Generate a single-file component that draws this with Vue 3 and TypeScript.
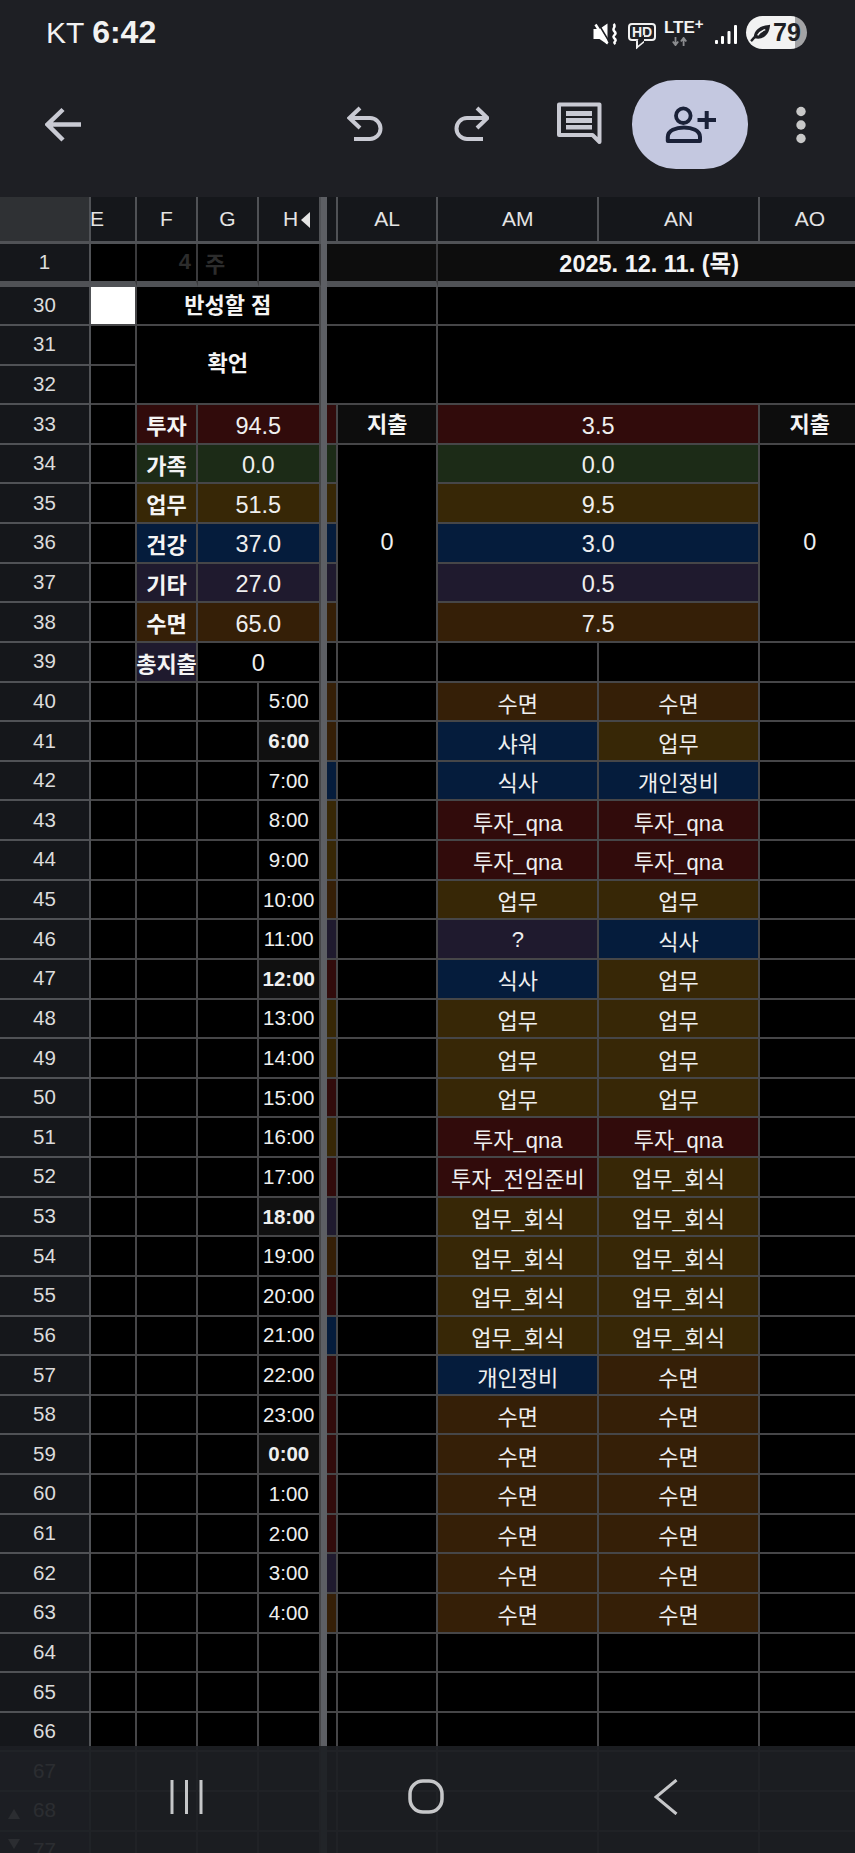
<script setup lang="ts">
type Tone = 'invest' | 'family' | 'work' | 'health' | 'other' | 'sleep' | 'none'

interface Cell {
  col: number
  span?: number
  row: number
  rowSpan?: number
  text?: string
  tone?: Tone
  kind?: string
}

// grid columns: 1 row header, 2 E, 3 F, 4 G, 5 H, 6 freeze bar, 7 AK, 8 AL, 9 AM, 10 AN, 11 AO
const headers = [
  { col: 2, text: 'E', kind: 'clip' },
  { col: 3, text: 'F', kind: '' },
  { col: 4, text: 'G', kind: '' },
  { col: 5, text: 'H', kind: 'collapse' },
  { col: 7, text: '', kind: '' },
  { col: 8, text: 'AL', kind: '' },
  { col: 9, text: 'AM', kind: '' },
  { col: 10, text: 'AN', kind: '' },
  { col: 11, text: 'AO', kind: '' },
]

const rowNumbers = [1]
for (let n = 30; n <= 68; n++) rowNumbers.push(n)
rowNumbers.push(77)

const gridRow = (n: number) => rowNumbers.indexOf(n) + 2

const summary: { row: number; label: string; left: string; right: string; tone: Tone }[] = [
  { row: 33, label: '투자', left: '94.5', right: '3.5', tone: 'invest' },
  { row: 34, label: '가족', left: '0.0', right: '0.0', tone: 'family' },
  { row: 35, label: '업무', left: '51.5', right: '9.5', tone: 'work' },
  { row: 36, label: '건강', left: '37.0', right: '3.0', tone: 'health' },
  { row: 37, label: '기타', left: '27.0', right: '0.5', tone: 'other' },
  { row: 38, label: '수면', left: '65.0', right: '7.5', tone: 'sleep' },
]

const S = '수면'
const W = '업무'
const Q = '투자_qna'
const D = '업무_회식'
const GR = '개인정비'

const toneOf = (text: string): Tone => {
  if (text === S) return 'sleep'
  if (text.startsWith('투자')) return 'invest'
  if (text.startsWith('업무')) return 'work'
  if (text === '?') return 'other'
  return 'health'
}

const schedule: [string, string, string, Tone][] = [
  ['5:00', S, S, 'sleep'],
  ['6:00', '샤워', W, 'sleep'],
  ['7:00', '식사', GR, 'health'],
  ['8:00', Q, Q, 'work'],
  ['9:00', Q, Q, 'work'],
  ['10:00', W, W, 'sleep'],
  ['11:00', '?', '식사', 'other'],
  ['12:00', '식사', W, 'invest'],
  ['13:00', W, W, 'work'],
  ['14:00', W, W, 'work'],
  ['15:00', W, W, 'invest'],
  ['16:00', Q, Q, 'work'],
  ['17:00', '투자_전임준비', D, 'invest'],
  ['18:00', D, D, 'other'],
  ['19:00', D, D, 'sleep'],
  ['20:00', D, D, 'invest'],
  ['21:00', D, D, 'health'],
  ['22:00', GR, S, 'invest'],
  ['23:00', S, S, 'invest'],
  ['0:00', S, S, 'invest'],
  ['1:00', S, S, 'invest'],
  ['2:00', S, S, 'invest'],
  ['3:00', S, S, 'other'],
  ['4:00', S, S, 'sleep'],
]

const cells: Cell[] = []

// row 1
cells.push({ col: 2, row: gridRow(1), kind: 'top' })
cells.push({ col: 3, row: gridRow(1), text: '4', kind: 'top dim end' })
cells.push({ col: 4, row: gridRow(1), text: '주', kind: 'top dim start' })
cells.push({ col: 5, row: gridRow(1), kind: 'top' })
cells.push({ col: 7, span: 2, row: gridRow(1), kind: 'top soft' })
cells.push({ col: 9, span: 3, row: gridRow(1), text: '2025. 12. 11. (목)', kind: 'top soft bold date' })

// rows 30 to 32
cells.push({ col: 2, row: gridRow(30), kind: 'white' })
cells.push({ col: 3, span: 3, row: gridRow(30), text: '반성할 점', kind: 'bold lift' })
cells.push({ col: 7, span: 2, row: gridRow(30) })
cells.push({ col: 9, span: 3, row: gridRow(30) })
cells.push({ col: 2, row: gridRow(31) })
cells.push({ col: 2, row: gridRow(32) })
cells.push({ col: 3, span: 3, row: gridRow(31), rowSpan: 2, text: '확언', kind: 'bold lift high' })
cells.push({ col: 7, span: 2, row: gridRow(31), rowSpan: 2 })
cells.push({ col: 9, span: 3, row: gridRow(31), rowSpan: 2 })

// rows 33 to 38
for (const s of summary) {
  const r = gridRow(s.row)
  cells.push({ col: 2, row: r })
  cells.push({ col: 3, row: r, text: s.label, tone: s.tone, kind: 'bold' })
  cells.push({ col: 4, span: 2, row: r, text: s.left, tone: s.tone, kind: 'num' })
  cells.push({ col: 7, row: r, tone: s.tone })
  cells.push({ col: 9, span: 2, row: r, text: s.right, tone: s.tone, kind: 'num' })
}
cells.push({ col: 8, row: gridRow(33), text: '지출', kind: 'soft bold lift' })
cells.push({ col: 11, row: gridRow(33), text: '지출', kind: 'soft bold lift' })
cells.push({ col: 8, row: gridRow(34), rowSpan: 5, text: '0', kind: 'num merged' })
cells.push({ col: 11, row: gridRow(34), rowSpan: 5, text: '0', kind: 'num merged' })

// row 39
const r39 = gridRow(39)
cells.push({ col: 2, row: r39 })
cells.push({ col: 3, row: r39, text: '총지출', tone: 'other', kind: 'bold' })
cells.push({ col: 4, span: 2, row: r39, text: '0', kind: 'num' })
for (const col of [7, 8, 9, 10, 11]) cells.push({ col, row: r39 })

// rows 40 to 63
schedule.forEach(([time, am, an, strip], i) => {
  const r = gridRow(40 + i)
  const major = ['0:00', '6:00', '12:00', '18:00'].includes(time)
  for (const col of [2, 3, 4, 8, 11]) cells.push({ col, row: r })
  cells.push({ col: 5, row: r, text: time, kind: major ? 'time major' : 'time' })
  cells.push({ col: 7, row: r, tone: strip })
  cells.push({ col: 9, row: r, text: am, tone: toneOf(am), kind: 'task' })
  cells.push({ col: 10, row: r, text: an, tone: toneOf(an), kind: 'task' })
})

// empty rows at the bottom
for (const n of [64, 65, 66, 67, 68, 77]) {
  for (const col of [2, 3, 4, 5, 7, 8, 9, 10, 11]) cells.push({ col, row: gridRow(n) })
}

const place = (c: Cell) => ({
  gridColumn: `${c.col} / span ${c.span ?? 1}`,
  gridRow: `${c.row} / span ${c.rowSpan ?? 1}`,
})
</script>

<template>
  <div class="phone">
    <div class="status">
      <div class="clock">KT <b>6:42</b></div>
      <div class="status-icons">
        <svg class="ic-mute" viewBox="593 22 25 22">
          <path d="M593.500 28h6l8 -5.500v21l-8 -5.500h-6z" fill="#fff" />
          <path d="M598 22l12 20" stroke="#1e1f24" stroke-width="1.500" />
          <path d="M595.500 23.500l12 19" stroke="#fff" stroke-width="2.500" />
          <path d="M613.500 23c3.500 3 -2.500 4.500 1 7.500s-3.500 4 0 7 -2.500 3 1 5.500" fill="none" stroke="#fff" stroke-width="2.500" />
        </svg>
        <div class="hd">
          <span>HD</span>
          <i></i>
        </div>
        <div class="lte">
          <div class="lte-text">LTE<sup>+</sup></div>
          <svg class="lte-arrows" viewBox="0 0 20 10">
            <path d="M5 0v8M2 5l3 4 3 -4M14 10v-8M11 5l3 -4 3 4" fill="none" stroke="#8b8c8f" stroke-width="2" />
          </svg>
        </div>
        <svg class="ic-signal" viewBox="0 0 22 19">
          <rect x="0" y="15" width="3" height="4" rx="1" fill="#fff" />
          <rect x="6" y="11" width="3" height="8" rx="1" fill="#fff" />
          <rect x="12.500" y="6" width="3" height="13" rx="1" fill="#fff" />
          <rect x="19" y="0" width="3" height="19" rx="1" fill="#fff" />
        </svg>
        <div class="battery">
          <svg class="ic-leaf" viewBox="0 0 22 20">
            <path d="M5 15C5 9 10 4 20 3 19 12 13 17 5 15Z" fill="#1e1f24" stroke="#1e1f24" stroke-width="2" />
            <path d="M1 19C4 16 6 13 9 11" fill="none" stroke="#1e1f24" stroke-width="2.500" />
            <path d="M8 13C10 10 13 8 16 7" fill="none" stroke="#f2f2f2" stroke-width="1.500" />
          </svg>
          <span>79</span>
        </div>
      </div>
    </div>

    <div class="toolbar">
      <svg class="ic-back" viewBox="45 105 37 40">
        <path d="M81 124.500H49M63 109.500L47.500 124.500 63 140" fill="none" stroke="#c9cad3" stroke-width="4.500" />
      </svg>
      <svg class="ic-undo" viewBox="347 105 36 36">
        <path d="M360 108L349.500 118 360 128M350 118H370A10.500 10.500 0 0 1 370 139H354" fill="none" stroke="#c9cad3" stroke-width="4" />
      </svg>
      <svg class="ic-redo" viewBox="454 105 36 36">
        <path d="M478 108L488.500 118 478 128M488 118H468A10.500 10.500 0 0 0 468 139H484" fill="none" stroke="#c9cad3" stroke-width="4" />
      </svg>
      <svg class="ic-comment" viewBox="556 102 46 45">
        <path d="M559 104.500H599.500V142L592.500 135H559Z" fill="none" stroke="#c9cad3" stroke-width="4" stroke-linejoin="round" />
        <path d="M566 111h26v5h-26zM566 118h26v5h-26zM566 125h26v4.500h-26z" fill="#c9cad3" />
      </svg>
      <div class="share">
        <svg class="ic-person" viewBox="665 106 51 38">
          <circle cx="683.300" cy="115.700" r="7.300" fill="none" stroke="#1a2138" stroke-width="3.800" />
          <path d="M667.800 141H700V137C700 130.500 692 127.500 684 127.500 676 127.500 667.800 130.500 667.800 137Z" fill="none" stroke="#1a2138" stroke-width="4" stroke-linejoin="round" />
          <path d="M697.500 120H716M706.700 111V129" fill="none" stroke="#1a2138" stroke-width="4" />
        </svg>
      </div>
      <svg class="ic-more" viewBox="0 0 12 38">
        <circle cx="6" cy="5.500" r="4.700" fill="#c8c8c8" />
        <circle cx="6" cy="19" r="4.700" fill="#c8c8c8" />
        <circle cx="6" cy="32.500" r="4.700" fill="#c8c8c8" />
      </svg>
    </div>

    <div class="sheet">
      <div class="corner"></div>
      <div
        v-for="h in headers"
        :key="h.col"
        class="col-head"
        :class="h.kind"
        :style="{ gridColumn: h.col, gridRow: 1 }"
      >
        {{ h.text }}
        <i v-if="h.kind === 'collapse'" class="collapse-mark"></i>
      </div>
      <div class="freeze"></div>

      <div
        v-for="n in rowNumbers"
        :key="n"
        class="row-head"
        :class="{ 'row-one': n === 1 }"
        :style="{ gridColumn: 1, gridRow: gridRow(n) }"
      >
        {{ n }}
        <i v-if="n === 68" class="fold up"></i>
        <i v-if="n === 77" class="fold down"></i>
      </div>

      <div
        v-for="(c, i) in cells"
        :key="i"
        class="cell"
        :class="[c.kind, c.tone]"
        :style="place(c)"
      >
        {{ c.text }}
      </div>
    </div>

    <div class="nav">
      <svg class="ic-recent" viewBox="0 0 33 34">
        <path d="M2 0V34M16.500 0V34M31 0V34" stroke="#c6c7c9" stroke-width="3" />
      </svg>
      <svg class="ic-home" viewBox="0 0 36 35">
        <rect x="2" y="2" width="32" height="31" rx="13" fill="none" stroke="#c6c7c9" stroke-width="3.500" />
      </svg>
      <svg class="ic-nav-back" viewBox="0 0 24 36">
        <path d="M22.500 1L2 18 22.500 35" fill="none" stroke="#c6c7c9" stroke-width="3" />
      </svg>
    </div>
  </div>
</template>

<style scoped>
.phone {
  position: relative;
  width: 855px;
  height: 1853px;
  overflow: hidden;
  background: #1e1f24;
  font-family: "Liberation Sans", "Noto Sans CJK KR", sans-serif;
  color: #ececec;
}

.status {
  display: flex;
  justify-content: space-between;
  height: 60px;
  padding: 0 46px;
  box-sizing: border-box;
}

.clock {
  font-size: 30px;
  line-height: 64px;
  color: #f2f2f2;
}

.clock b {
  font-size: 32px;
  font-weight: 700;
}

.status-icons {
  display: flex;
  align-items: flex-start;
  position: absolute;
  left: 593px;
  top: 16px;
}

.ic-mute {
  width: 25px;
  height: 22px;
  margin: 7px 10px 0 0;
}

.hd {
  position: relative;
  width: 28px;
  height: 18px;
  margin: 7px 8px 0 0;
  border: 2px solid #f0f0f0;
  border-radius: 4px;
  box-sizing: border-box;
  font-size: 14px;
  font-weight: 700;
  line-height: 14px;
  text-align: center;
  color: #f0f0f0;
}

.hd i {
  position: absolute;
  left: 6px;
  bottom: -7px;
  width: 6px;
  height: 6px;
  border-left: 2px solid #f0f0f0;
  border-bottom: 2px solid #f0f0f0;
  transform: skewY(-40deg);
  background: #1e1f24;
}

.lte {
  width: 42px;
  margin-right: 9px;
}

.lte-text {
  font-size: 17px;
  font-weight: 700;
  line-height: 17px;
  margin-top: 3px;
  color: #f2f2f2;
  white-space: nowrap;
}

.lte-text sup {
  font-size: 15px;
  line-height: 0;
  vertical-align: 4px;
}

.lte-arrows {
  display: block;
  width: 18px;
  height: 9px;
  margin: 1px 0 0 7px;
}

.ic-signal {
  width: 22px;
  height: 19px;
  margin: 9px 9px 0 0;
}

.battery {
  display: flex;
  align-items: center;
  width: 61px;
  height: 33px;
  border-radius: 17px;
  background: linear-gradient(to right, #f2f2f2 49px, #a3a3a5 49px);
  color: #1e1f24;
  font-size: 25px;
  font-weight: 700;
  line-height: 33px;
}

.ic-leaf {
  width: 21px;
  height: 19px;
  margin: 0 2px 0 4px;
}

.toolbar {
  display: flex;
  align-items: center;
  height: 136.7px;
  padding-bottom: 7px;
  box-sizing: border-box;
}

.toolbar svg {
  flex: none;
}

.ic-back {
  width: 37px;
  height: 40px;
  margin: 1px 0 0 45px;
}

.ic-undo {
  width: 36px;
  height: 36px;
  margin: 0 0 3px 265px;
}

.ic-redo {
  width: 36px;
  height: 36px;
  margin: 0 0 3px 70px;
}

.ic-comment {
  width: 46px;
  height: 45px;
  margin-left: 67px;
}

.share {
  display: flex;
  align-items: center;
  justify-content: center;
  width: 116px;
  height: 89px;
  margin-left: 30px;
  border-radius: 44px;
  background: #c4c8e0;
}

.ic-person {
  width: 51px;
  height: 38px;
}

.ic-more {
  width: 12px;
  height: 38px;
  margin-left: 47px;
}

.sheet {
  display: grid;
  width: 860px;
  grid-template-columns: 91px 46px 61px 61px 61.5px 6px 11.3px 100.7px 160.7px 160.7px 102px;
  grid-template-rows: 47.3px 43px 39px repeat(39, 39.63px);
  background: #000;
}

.corner {
  grid-column: 1;
  grid-row: 1;
  background: #2f3134;
  border-right: 2px solid #505256;
  border-bottom: 3px solid #505256;
  box-sizing: border-box;
}

.freeze {
  grid-column: 6;
  grid-row: 1 / -1;
  background: #5d5f64;
  z-index: 1;
}

.col-head {
  position: relative;
  display: flex;
  align-items: center;
  justify-content: center;
  box-sizing: border-box;
  background: #15171b;
  border-right: 2px solid #505256;
  border-bottom: 3px solid #505256;
  font-size: 21px;
  color: #e4e4e4;
}

.col-head.clip {
  justify-content: flex-start;
  text-indent: -1px;
}

.col-head.collapse {
  justify-content: flex-start;
  padding-left: 24px;
}

.collapse-mark {
  position: absolute;
  left: 42px;
  top: 15px;
  border-style: solid;
  border-width: 8px 9px 8px 0;
  border-color: transparent #e4e4e4 transparent transparent;
}

.row-head {
  position: relative;
  display: flex;
  align-items: center;
  justify-content: center;
  box-sizing: border-box;
  background: #15171b;
  border-right: 2px solid #505256;
  border-bottom: 2px solid #505256;
  padding-bottom: 1px;
  font-size: 20.5px;
  color: #dcdcdc;
}

.row-head.row-one {
  border-bottom-width: 6px;
}

.fold {
  position: absolute;
  left: 8px;
  border-style: solid;
  border-color: transparent;
}

.fold.up {
  top: 17px;
  border-width: 0 6px 10px 6px;
  border-bottom-color: #dcdcdc;
}

.fold.down {
  top: 7px;
  border-width: 10px 6px 0 6px;
  border-top-color: #dcdcdc;
}

.cell {
  display: flex;
  align-items: center;
  justify-content: center;
  box-sizing: border-box;
  min-width: 0;
  background: #000;
  border-right: 2px solid #464648;
  border-bottom: 2px solid #464648;
  white-space: nowrap;
  font-size: 22px;
  color: #efefef;
}

.cell.top {
  border-bottom: 6px solid #505256;
  border-right-color: #3a3a3c;
}

.cell.soft {
  background: #0d0d0d;
}

.cell.top.soft {
  border-bottom: 6px solid #505256;
}

.cell.bold {
  font-weight: 700;
  font-size: 22px;
  color: #f4f4f4;
}

.cell.lift {
  padding-bottom: 4px;
}

.cell.lift.high {
  padding-bottom: 7px;
}

.cell.date {
  font-size: 23.5px;
}

.cell.dim {
  font-weight: 700;
  font-size: 22px;
  color: #2c2c2c;
}

.cell.end {
  justify-content: flex-end;
  padding-right: 5px;
}

.cell.start {
  justify-content: flex-start;
  padding-left: 7px;
}

.cell.white {
  background: #fff;
}

.cell.num {
  font-size: 23.5px;
  padding-top: 4px;
}

.cell.num.merged {
  padding-top: 0;
}

.cell.time {
  font-size: 20.5px;
}

.cell.time.major {
  background: #101010;
  font-weight: 700;
}

.cell.task {
  padding-top: 1px;
}

.cell.invest {
  background: #310b0b;
}

.cell.family {
  background: #1c2b17;
}

.cell.work {
  background: #372706;
}

.cell.health {
  background: #051c3c;
}

.cell.other {
  background: #1f1a2e;
}

.cell.sleep {
  background: #351f07;
}

/* the navigation bar lies over the sheet */
.nav {
  position: absolute;
  left: 0;
  right: 0;
  bottom: 0;
  z-index: 2;
  display: flex;
  align-items: flex-start;
  height: 107px;
  background: rgba(29, 31, 35, 0.93);
}

.ic-recent {
  width: 33px;
  height: 34px;
  margin: 34px 0 0 170px;
}

.ic-home {
  width: 36px;
  height: 35px;
  margin: 33px 0 0 205px;
}

.ic-nav-back {
  width: 24px;
  height: 36px;
  margin: 33px 0 0 210px;
}
</style>
